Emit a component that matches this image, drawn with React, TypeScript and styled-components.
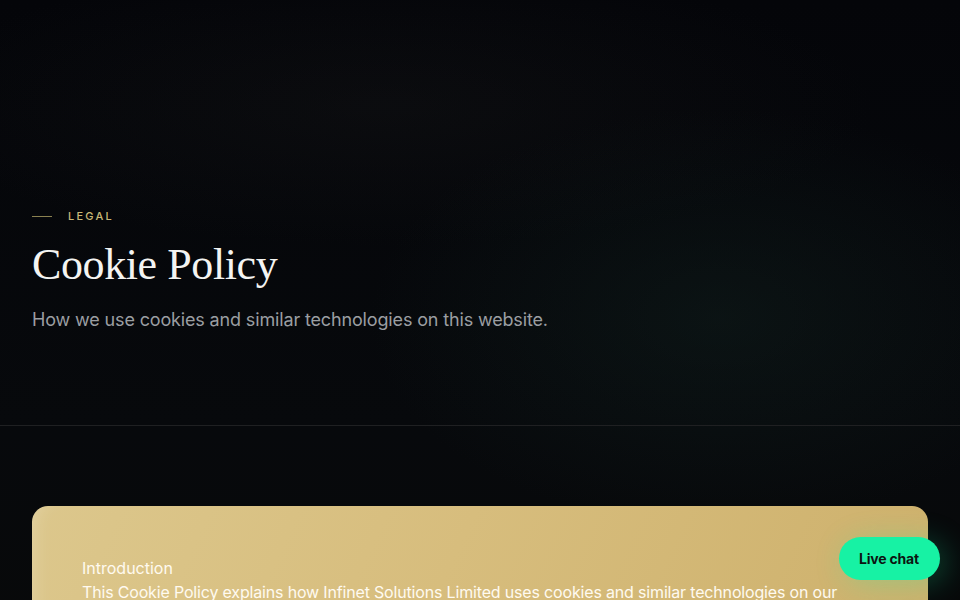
import React from 'react'
import styled, { createGlobalStyle } from 'styled-components'

const GlobalStyle = createGlobalStyle`
  html, body {
    margin: 0;
    padding: 0;
    background: #05070a;
    overflow: hidden;
  }
  * { box-sizing: border-box; }
`

const Page = styled.div`
  min-height: 600px;
  width: 960px;
  background:
    radial-gradient(ellipse 500px 300px at 75% 45%, rgba(20, 40, 36, 0.35), transparent 70%),
    radial-gradient(ellipse 700px 200px at 40% 15%, rgba(30, 30, 30, 0.25), transparent 70%),
    linear-gradient(180deg, #040509 0%, #07090c 60%, #080909 100%);
  font-family: Inter, 'Noto Sans', sans-serif;
  color: #fff;
  position: relative;
  overflow: hidden;
`

const Hero = styled.header`
  height: 426px;
  padding: 209px 32px 0;
  border-bottom: 1px solid #1f2022;
`

const Eyebrow = styled.div`
  display: flex;
  align-items: center;
  gap: 16px;
  font-size: 11px;
  letter-spacing: 2.2px;
  color: #c9b978;
  font-weight: 500;
  line-height: 14px;
`

const Rule = styled.span`
  width: 20px;
  height: 1px;
  background: #8a8150;
`

const Title = styled.h1`
  margin: 13px 0 0;
  font-family: 'Liberation Serif', 'DejaVu Serif', serif;
  font-weight: 400;
  font-size: 44px;
  line-height: 58px;
  letter-spacing: -0.4px;
  color: #f4f4f2;
`

const Subtitle = styled.p`
  margin: 13px 0 0;
  font-size: 18px;
  line-height: 26px;
  color: #9b9ea2;
  letter-spacing: -0.15px;
`

const Main = styled.main`
  padding: 80px 32px 0;
`

const Card = styled.section`
  border-radius: 16px;
  padding: 51px 50px 0;
  min-height: 200px;
  background: linear-gradient(115deg, #dcc78c 0%, #d7bd7d 45%, #cdb06b 100%);
  box-shadow: inset 14px 0 20px -14px rgba(255, 255, 255, 0.25);
`

const SectionHeading = styled.h2`
  margin: 0;
  font-size: 16px;
  font-weight: 400;
  line-height: 22px;
  color: #fffaf0;
`

const Paragraph = styled.p`
  margin: 1px 0 0;
  font-size: 16px;
  line-height: 24px;
  color: #fffaf0;
  letter-spacing: -0.17px;
`

const ChatButton = styled.button`
  position: absolute;
  left: 839px;
  top: 537px;
  height: 43px;
  padding: 0 21px 0 20px;
  border: none;
  border-radius: 22px;
  background: #17f2a4;
  color: #0c1512;
  font-family: Inter, sans-serif;
  font-weight: 700;
  font-size: 14px;
  letter-spacing: -0.2px;
  box-shadow: 6px 4px 30px rgba(23, 242, 164, 0.25);
  cursor: pointer;
`

export default function App() {
  return (
    <>
      <GlobalStyle />
      <Page>
        <Hero>
          <Eyebrow>
            <Rule />
            LEGAL
          </Eyebrow>
          <Title>Cookie Policy</Title>
          <Subtitle>How we use cookies and similar technologies on this website.</Subtitle>
        </Hero>
        <Main>
          <Card>
            <SectionHeading>Introduction</SectionHeading>
            <Paragraph>
              This Cookie Policy explains how Infinet Solutions Limited uses cookies and similar technologies on our
              website.
            </Paragraph>
          </Card>
        </Main>
        <ChatButton>Live chat</ChatButton>
      </Page>
    </>
  )
}
